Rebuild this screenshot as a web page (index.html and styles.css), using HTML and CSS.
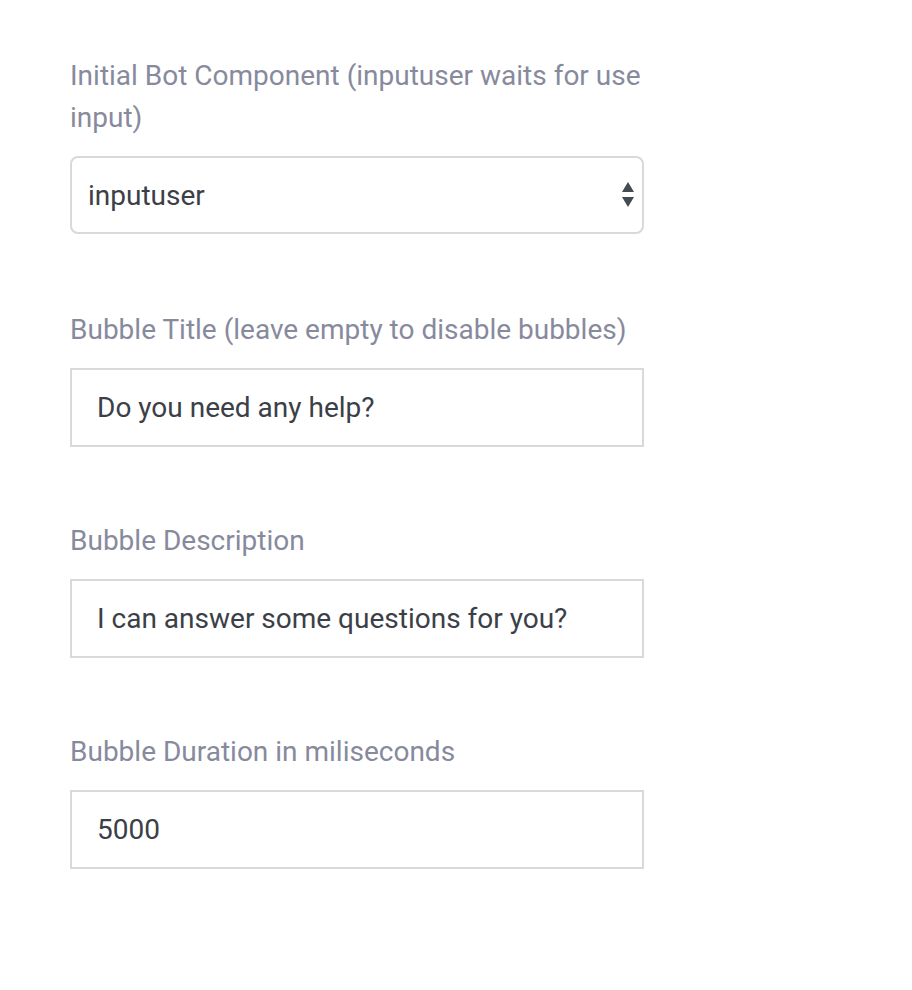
FILE: index.html
```html
<!DOCTYPE html>
<html>
<head>
<meta charset="utf-8">
<link rel="stylesheet" href="styles.css">
</head>
<body>
<form class="form">
  <div class="group group-first">
    <label class="label">Initial Bot Component (inputuser waits for use input)</label>
    <div class="select-wrap">
      <select class="field select">
        <option>inputuser</option>
      </select>
      <svg class="arrows" width="12" height="26" viewBox="0 0 12 26">
        <polygon points="6,0 12,10 0,10" fill="#454b52"/>
        <polygon points="0,15 12,15 6,25" fill="#454b52"/>
      </svg>
    </div>
  </div>
  <div class="group">
    <label class="label">Bubble Title (leave empty to disable bubbles)</label>
    <input class="field input" type="text" value="Do you need any help?">
  </div>
  <div class="group">
    <label class="label">Bubble Description</label>
    <input class="field input" type="text" value="I can answer some questions for you?">
  </div>
  <div class="group">
    <label class="label">Bubble Duration in miliseconds</label>
    <input class="field input" type="text" value="5000">
  </div>
</form>
</body>
</html>
```

FILE: styles.css
```css
html, body {
  margin: 0;
  padding: 0;
  background: #ffffff;
}
body {
  font-family: Roboto, "Liberation Sans", sans-serif;
  min-height: 990px;
}
.form {
  padding: 55px 0 0 70px;
  width: 574px;
}
.group {
  display: flex;
  flex-direction: column;
  margin-bottom: 73px;
}
.group-first {
  margin-bottom: 75px;
}
.label {
  display: block;
  font-size: 28px;
  line-height: 42px;
  color: #878a9d;
  margin-bottom: 17px;
}
.field {
  box-sizing: border-box;
  width: 574px;
  height: 79px;
  border: 2px solid #d9d9d9;
  background: #fff;
  font-family: Roboto, "Liberation Sans", sans-serif;
  font-size: 28px;
  color: #3b4047;
  outline: none;
  margin: 0;
}
.input {
  padding: 0 0 0 25px;
  border-radius: 0;
}
.select-wrap {
  position: relative;
  width: 574px;
}
.select {
  -webkit-appearance: none;
  appearance: none;
  border-radius: 8px;
  padding: 0 0 0 16px;
  height: 78px;
  display: block;
}
.arrows {
  position: absolute;
  right: 10px;
  top: 26px;
  pointer-events: none;
}
```
